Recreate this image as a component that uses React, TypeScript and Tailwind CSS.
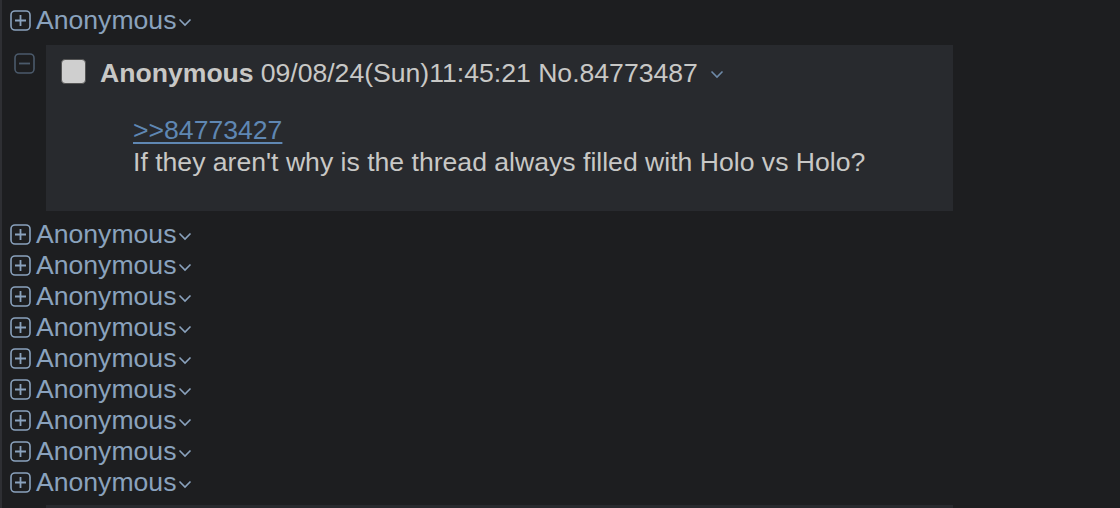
import React from "react";

const font = { fontFamily: '"Liberation Sans", Arial, Helvetica, sans-serif' };

function PlusIcon() {
  return (
    <svg width="21" height="21" viewBox="0 0 21 21" className="shrink-0">
      <rect x="1" y="1" width="19" height="19" rx="4" fill="none" stroke="#8aa2bd" strokeWidth="1.6" />
      <path d="M5 10.5h11M10.5 5v11" stroke="#8aa2bd" strokeWidth="1.8" />
    </svg>
  );
}

function MinusIcon() {
  return (
    <svg width="21" height="21" viewBox="0 0 21 21" className="shrink-0">
      <rect x="1" y="1" width="19" height="19" rx="4" fill="none" stroke="#4b5a6b" strokeWidth="1.6" />
      <path d="M5 10.5h11" stroke="#4b5a6b" strokeWidth="1.8" />
    </svg>
  );
}

function Chevron({ color }: { color: string }) {
  return (
    <svg width="14" height="9" viewBox="0 0 14 9" className="shrink-0">
      <path d="M1.5 1.5l5.5 5.5 5.5-5.5" fill="none" stroke={color} strokeWidth="1.6" />
    </svg>
  );
}

function Collapsed() {
  return (
    <div className="flex h-[31px] items-center pl-[8px]">
      <PlusIcon />
      <span className="ml-[5px] text-[26.6px] leading-[31px] text-[#8aa2bd]">Anonymous</span>
      <span className="ml-[2px] mt-[4px]">
        <Chevron color="#8aa2bd" />
      </span>
    </div>
  );
}

export default function App() {
  return (
    <div
      className="h-[508px] w-[1120px] overflow-hidden border-l-2 border-[#2e2f33] bg-[#1d1e20] pt-[5px]"
      style={font}
    >
      <Collapsed />
      <div className="mt-[9px] flex">
        <div className="w-[44px] shrink-0 pl-[12px] pt-[8px]">
          <MinusIcon />
        </div>
        <div className="h-[166px] w-[907px] bg-[#282a2e] pl-[15px] pt-[13px]">
          <div className="flex items-center">
            <div className="mb-[5px] h-[25px] w-[25px] rounded-[4px] border border-[#555] bg-[#cfcfcf]" />
            <span className="ml-[14px] text-[26.6px] font-bold leading-[31px] text-[#c8c8c6]">Anonymous</span>
            <span className="ml-[7px] text-[26.6px] leading-[31px] text-[#c8c8c6]">
              09/08/24(Sun)11:45:21 No.84773487
            </span>
            <span className="ml-[12px] mt-[2px]">
              <Chevron color="#6e8aa8" />
            </span>
          </div>
          <div className="ml-[72px] mt-[25px] text-[26.6px] leading-[32px] text-[#c8c8c6]">
            <a href="#" className="text-[#5f87b3] underline decoration-[2px] underline-offset-[3px]">
              &gt;&gt;84773427
            </a>
            <div>If they aren't why is the thread always filled with Holo vs Holo?</div>
          </div>
        </div>
      </div>
      <div className="mt-[8px]">
        {Array.from({ length: 9 }).map((_, i) => (
          <Collapsed key={i} />
        ))}
      </div>
      <div className="ml-[44px] mt-[7px] h-[20px] w-[907px] bg-[#282a2e]" />
    </div>
  );
}
